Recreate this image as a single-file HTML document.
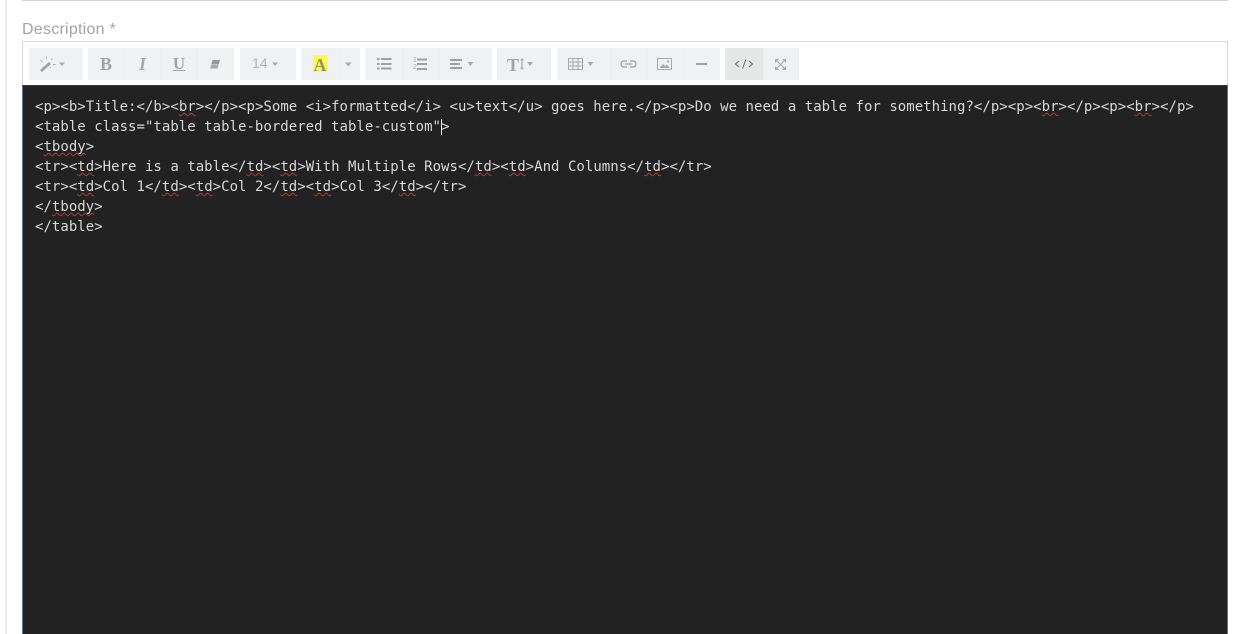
<!DOCTYPE html>
<html><head><meta charset="utf-8"><style>
html,body{margin:0;padding:0;width:1238px;height:634px;overflow:hidden;background:#fff;font-family:"Liberation Sans",sans-serif}
.abs,.b,.g,.s{position:absolute}
.g{top:48px;height:32px;background:#f0f1f2}
.s{top:48px;width:1px;height:32px;background:#ecedee}
svg{position:absolute;left:0;top:0}
pre{position:absolute;left:35px;margin:0;font-family:"DejaVu Sans Mono",monospace;font-size:14px;line-height:20px;letter-spacing:.03px;color:#d8d8d8;white-space:pre}
u{text-decoration:underline wavy #c8322c 1px;text-underline-offset:1px;text-decoration-skip-ink:none}
</style></head><body>
<div class="abs" style="left:5px;top:0;width:2px;height:634px;background:#eeeeee"></div>
<div class="abs" style="left:22px;top:0;width:1206px;height:1px;background:#d5d5d5"></div>
<div class="abs" style="left:22px;top:21px;font-size:16px;letter-spacing:.25px;line-height:18px;color:#a3a3a3">Description *</div>
<div class="abs" style="left:22px;top:41px;width:1204px;height:44px;border:1px solid #d8d8d8;border-bottom:0"></div>
<div class="abs" style="left:22px;top:85px;width:1206px;height:549px;background:#222;border-left:1px solid #5d7796;border-right:1px solid #5d7796;box-sizing:border-box;border-top:1px solid #2c3e4a"></div>

<div class="g" style="left:29px;width:54px"></div>
<div class="g" style="left:88px;width:146px"></div>
<div class="g" style="left:240px;width:56px"></div>
<div class="g" style="left:301px;width:59px"></div>
<div class="g" style="left:365px;width:127px"></div>
<div class="g" style="left:497px;width:54px"></div>
<div class="g" style="left:557px;width:163px"></div>
<div class="g" style="left:725px;width:74px"></div>
<div class="g" style="left:725px;width:38px;background:#e6e8e8"></div>
<div class="s" style="left:123px"></div><div class="s" style="left:161px"></div><div class="s" style="left:197px"></div>
<div class="s" style="left:339px"></div>
<div class="s" style="left:402px"></div><div class="s" style="left:438px"></div>
<div class="s" style="left:610px"></div><div class="s" style="left:646px"></div><div class="s" style="left:683px"></div>
<div class="s" style="left:763px"></div>
<div class="abs" style="left:313px;top:55px;width:14px;height:17px;background:#fbfb4c"></div>

<svg width="1238" height="100" viewBox="0 0 1238 100" fill="none">
<g fill="#aaa">
<!-- wand -->
<path d="M40 70l9-8 2 2-9 8z" fill="#a0a0a0"/>
<path d="M46.500 56.500v3M40.500 60l2 2M52.500 58.500l-1.500 1.500M53 64.500h3M50 67l1 1" stroke="#bbb" stroke-width="1"/>
<!-- carets -->
<path d="M59 62.500h6l-3 3.500zM272 62.500h6l-3 3.500zM345 62.500h6.500l-3.250 4zM467.500 62h6l-3 4zM527 62h6l-3 4zM587.500 62h6l-3 4z"/>
<!-- eraser -->
<path d="M212.500 60h7.500l-1.300 4.500h-7.500z" fill="#999"/><path d="M211 65h7.500l-.8 3.500h-7.500z" fill="#aaa"/>
<!-- list -->
<path d="M377 58h2.500v2h-2.500zM377 63h2.500v2h-2.500zM377 67.500h2.500v2h-2.500zM381 58h10.500v2h-10.500zM381 63h10.500v2h-10.500zM381 67.500h10.500v2h-10.500z" fill="#a0a0a0"/>
<path d="M417 58.500h10v2h-10zM417 63h10v2h-10zM417 68h10v2h-10z" fill="#a0a0a0"/>
<!-- align -->
<path d="M450 59h12v2h-12zM450 63h10v2h-10zM450 67h12v2h-12z" fill="#a0a0a0"/>
<!-- height arrow -->
<path d="M522 58l2 2.500h-1.400v7h1.400l-2 2.500-2-2.500h1.400v-7h-1.400z"/>
<!-- hr -->
<path d="M696 63h11v2h-11z" fill="#a0a0a0"/>
</g>
<!-- table -->
<path d="M568.500 58.500h14v11h-14zM568.500 62h14M568.500 66h14M573 58.500v11M578 58.500v11" stroke="#aaa" stroke-width="1"/>
<!-- link -->
<path d="M627 61h-3a3 3 0 0 0 0 6h3M630 61h3a3 3 0 0 1 0 6h-3M625 64h7" stroke="#a0a0a0" stroke-width="1.300"/>
<!-- image -->
<path d="M657.500 58.500h14v11h-14z" stroke="#aaa" stroke-width="1"/>
<path d="M659.500 68l3.500-4 2 2 2-1.500 2.500 3.500z" fill="#aaa"/><rect x="667" y="60.500" width="2" height="2" fill="#aaa"/>
<!-- fullscreen -->
<path d="M775.500 59.500l10 10M785.500 59.500l-10 10" stroke="#aaa" stroke-width="1.100"/>
<path d="M775 59h4l-4 4zM786 59h-4l4 4zM775 70h4l-4-4zM786 70h-4l4-4z" fill="#aaa"/>
<!-- code -->
<path d="M739 61l-3.500 3 3.500 3M749 61l3.500 3-3.500 3M745.800 59.500l-3.200 9" stroke="#666" stroke-width="1"/>
</svg>

<div class="abs" style="left:88px;top:55px;width:36px;text-align:center;font:bold 18px/18px 'Liberation Serif',serif;color:#a3a3a3">B</div>
<div class="abs" style="left:124px;top:55px;width:37px;text-align:center;font:italic bold 18px/18px 'Liberation Serif',serif;color:#a8a8a8">I</div>
<div class="abs" style="left:161px;top:55px;width:36px;text-align:center;font:bold 17px/18px 'Liberation Serif',serif;color:#a3a3a3;text-decoration:underline">U</div>
<div class="abs" style="left:252px;top:55px;font-size:14px;line-height:16px;color:#b4b4b4">14</div>
<div class="abs" style="left:313px;top:56px;width:14px;text-align:center;font:bold 18px/18px 'Liberation Serif',serif;color:#95956e">A</div>
<div class="abs" style="left:507px;top:56px;font:bold 18px/18px 'Liberation Serif',serif;color:#a3a3a3">T</div>
<div class="abs" style="left:413px;top:57px;font-size:7px;line-height:7px;color:#aaa">1<br>2</div>

<pre style="top:97px">&lt;p&gt;&lt;b&gt;Title:&lt;/b&gt;&lt;<u>br</u>&gt;&lt;/p&gt;&lt;p&gt;Some &lt;i&gt;formatted&lt;/i&gt; &lt;u&gt;text&lt;/u&gt; goes here.&lt;/p&gt;&lt;p&gt;Do we need a table for something?&lt;/p&gt;&lt;p&gt;&lt;<u>br</u>&gt;&lt;/p&gt;&lt;p&gt;&lt;<u>br</u>&gt;&lt;/p&gt;
&lt;table class="table table-bordered table-custom"&gt;
&lt;<u>tbody</u>&gt;
&lt;tr&gt;&lt;<u>td</u>&gt;Here is a table&lt;/<u>td</u>&gt;&lt;<u>td</u>&gt;With Multiple Rows&lt;/<u>td</u>&gt;&lt;<u>td</u>&gt;And Columns&lt;/<u>td</u>&gt;&lt;/tr&gt;
&lt;tr&gt;&lt;<u>td</u>&gt;Col 1&lt;/<u>td</u>&gt;&lt;<u>td</u>&gt;Col 2&lt;/<u>td</u>&gt;&lt;<u>td</u>&gt;Col 3&lt;/<u>td</u>&gt;&lt;/tr&gt;
&lt;/<u>tbody</u>&gt;
&lt;/table&gt;</pre>
<div class="abs" style="left:441px;top:119px;width:1px;height:16px;background:#e8e8e8"></div>
</body></html>
